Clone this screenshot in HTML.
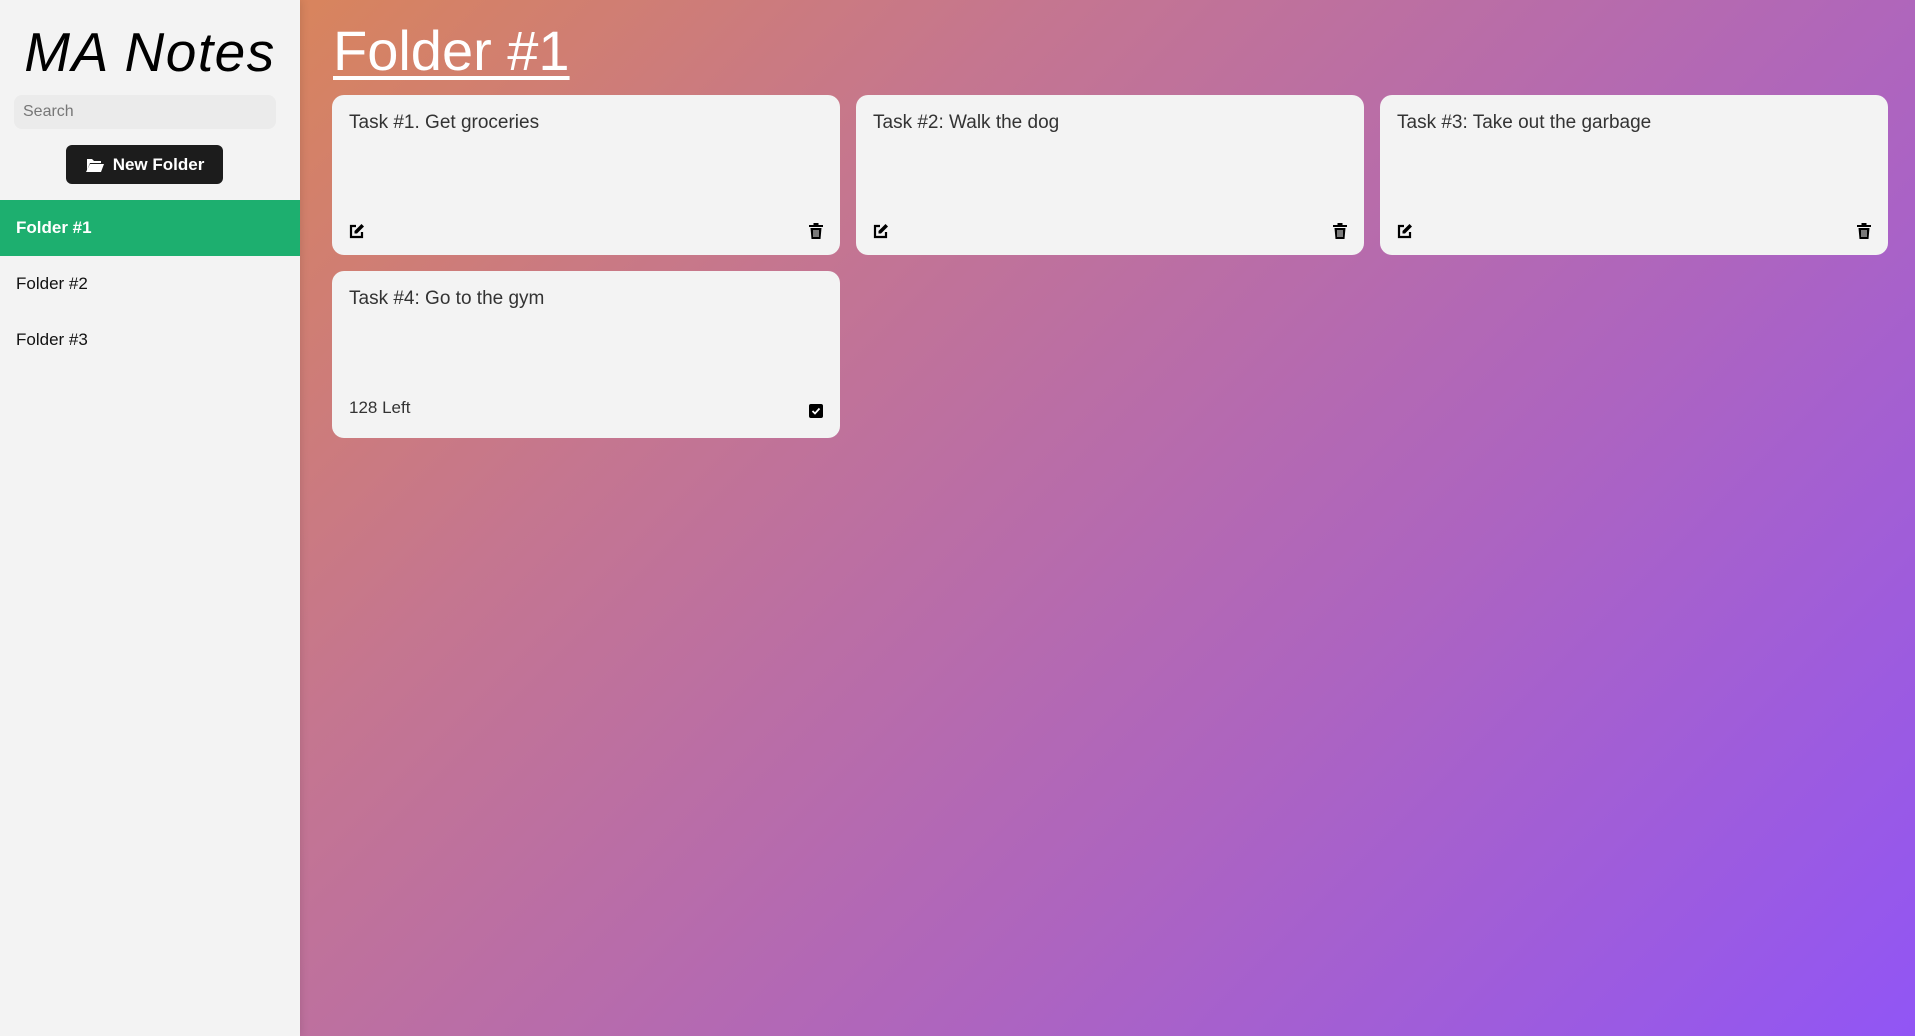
<!DOCTYPE html>
<html><head><meta charset="utf-8"><style>
*{box-sizing:border-box;margin:0;padding:0}
body{width:1915px;height:1036px;overflow:hidden;font-family:"Liberation Sans",sans-serif;background:linear-gradient(135deg,#e08a48 0%,#c5768f 35%,#ad64c0 68%,#9155f5 100%);position:relative}
.side{position:absolute;left:0;top:0;width:300px;height:1036px;background:#f3f3f3;box-shadow:1px 0 8px rgba(0,0,0,.12)}
.side h1{font-weight:400;font-style:italic;font-size:55px;text-align:center;margin-top:20px;letter-spacing:1.5px;color:#000;height:62px}
.search{position:absolute;left:14px;top:95px;width:262px;height:34px;background:#ebebeb;border-radius:8px;color:#777;font-size:16px;padding:8px 9px}
.btn{position:absolute;left:66px;top:145px;width:157px;height:39px;background:#1c1c1c;color:#fff;border-radius:6px;font-size:17px;font-weight:bold;display:flex;align-items:center;justify-content:center;gap:8px}
.f{position:absolute;left:0;width:300px;height:56px;font-size:17px;padding-left:16px;line-height:56px;color:#111}
.f.a{background:#1daf6f;color:#fff;font-weight:bold}
h2{position:absolute;left:333px;top:18px;font-size:56px;font-weight:400;color:#fff;text-decoration:underline;text-decoration-thickness:4px;text-underline-offset:6px}
.c{position:absolute;width:508px;background:#f3f3f3;border-radius:12px;color:#333}
.c .t{position:absolute;left:17px;top:17px;font-size:19px}
.c .l{position:absolute;left:17px;bottom:20px;font-size:17px}
.ic{position:absolute;bottom:16px}
</style></head><body>
<div class="side">
<h1>MA Notes</h1>
<div class="search">Search</div>
<div class="btn"><svg width="20" height="16" viewBox="0 0 20 16"><path d="M1 2h6l2 2h7v2H5L2 13V2z M5 7h14l-3 8H1z" fill="#fff"/></svg>New Folder</div>
<div class="f a" style="top:200px">Folder #1</div>
<div class="f" style="top:256px">Folder #2</div>
<div class="f" style="top:312px">Folder #3</div>
</div>
<h2>Folder #1</h2>

<div class="c" style="left:332px;top:95px;height:160px"><div class="t">Task #1. Get groceries</div>
<svg class="ic" style="left:17px" width="16" height="16" viewBox="0 0 16 16"><path d="M7 3H2v11h11V9" fill="none" stroke="#000" stroke-width="2.2"/><path d="M12.5 1l2.5 2.5L8 10.5H5.5V8z" fill="#000"/></svg>
<svg class="ic" style="right:17px" width="14" height="16" viewBox="0 0 14 16"><path d="M0 2h14v2H0zM4.5 0h5v2h-5zM1.5 5h11l-1 11h-9z" fill="#000"/><path d="M5 7v7M7 7v7M9 7v7" stroke="#f3f3f3" stroke-width="1"/></svg></div>

<div class="c" style="left:856px;top:95px;height:160px"><div class="t">Task #2: Walk the dog</div>
<svg class="ic" style="left:17px" width="16" height="16" viewBox="0 0 16 16"><path d="M7 3H2v11h11V9" fill="none" stroke="#000" stroke-width="2.2"/><path d="M12.5 1l2.5 2.5L8 10.5H5.5V8z" fill="#000"/></svg>
<svg class="ic" style="right:17px" width="14" height="16" viewBox="0 0 14 16"><path d="M0 2h14v2H0zM4.5 0h5v2h-5zM1.5 5h11l-1 11h-9z" fill="#000"/><path d="M5 7v7M7 7v7M9 7v7" stroke="#f3f3f3" stroke-width="1"/></svg></div>

<div class="c" style="left:1380px;top:95px;height:160px"><div class="t">Task #3: Take out the garbage</div>
<svg class="ic" style="left:17px" width="16" height="16" viewBox="0 0 16 16"><path d="M7 3H2v11h11V9" fill="none" stroke="#000" stroke-width="2.2"/><path d="M12.5 1l2.5 2.5L8 10.5H5.5V8z" fill="#000"/></svg>
<svg class="ic" style="right:17px" width="14" height="16" viewBox="0 0 14 16"><path d="M0 2h14v2H0zM4.5 0h5v2h-5zM1.5 5h11l-1 11h-9z" fill="#000"/><path d="M5 7v7M7 7v7M9 7v7" stroke="#f3f3f3" stroke-width="1"/></svg></div>

<div class="c" style="left:332px;top:271px;height:167px"><div class="t">Task #4: Go to the gym</div>
<div class="l">128 Left</div>
<svg class="ic" style="right:17px;bottom:20px" width="14" height="14" viewBox="0 0 14 14"><rect width="14" height="14" rx="2" fill="#000"/><path d="M3.5 7l2.5 2.5 4.5-5" fill="none" stroke="#fff" stroke-width="1.8"/></svg></div>
</body></html>
